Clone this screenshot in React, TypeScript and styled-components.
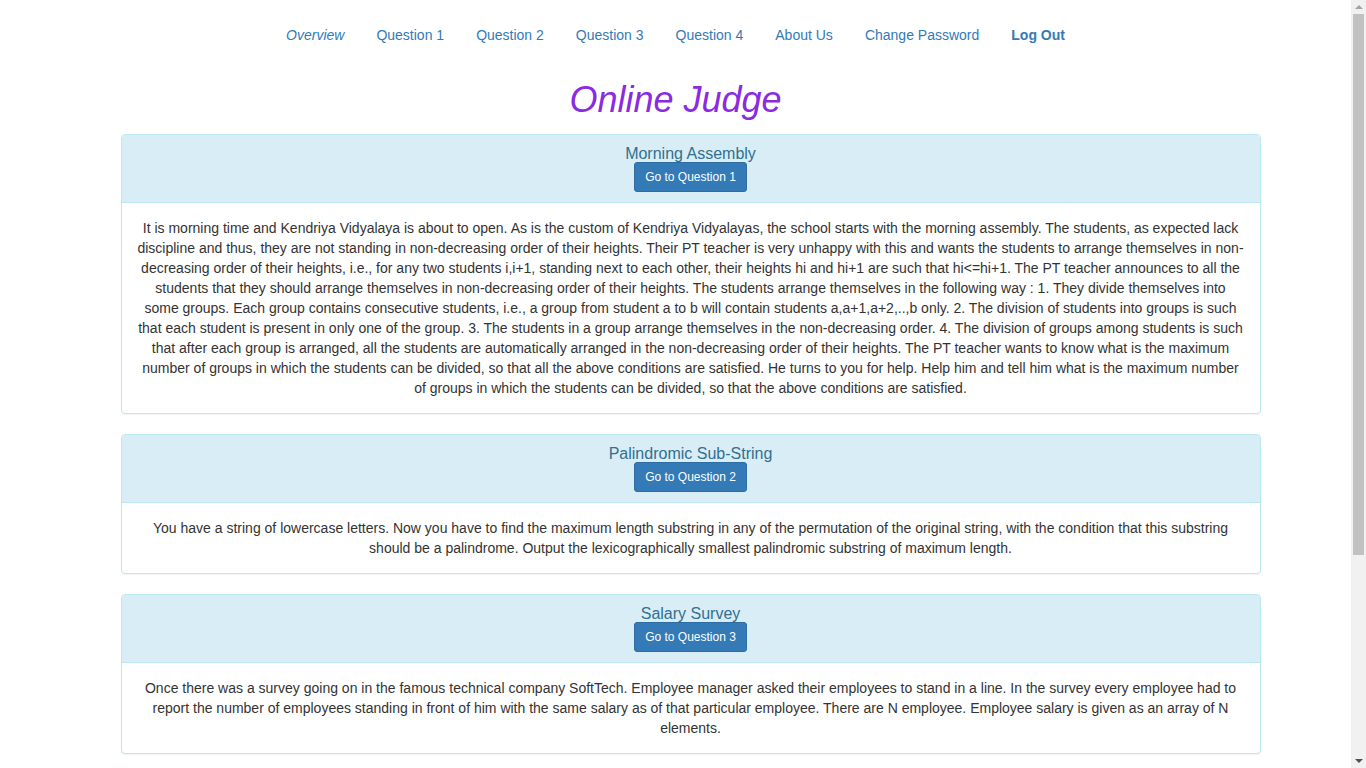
import React from "react";
import styled, { createGlobalStyle } from "styled-components";

const GlobalStyle = createGlobalStyle`
  html, body {
    margin: 0;
    padding: 0;
    background: #fff;
  }
  body {
    font-family: "Liberation Sans", Arial, Helvetica, sans-serif;
    font-size: 14px;
    line-height: 20px;
    color: #333;
  }
  * { box-sizing: border-box; }
`;

const Page = styled.div`
  margin-right: 15px;
  padding-top: 15px;
  padding-bottom: 40px;
`;

const Nav = styled.ul`
  list-style: none;
  margin: 0;
  padding: 0;
  display: flex;
  justify-content: center;
`;

const NavItem = styled.li`
  margin-left: 2px;
  &:first-child { margin-left: 0; }
`;

const NavLink = styled.a<{ $italic?: boolean; $bold?: boolean }>`
  display: block;
  padding: 10px 15px;
  line-height: 20px;
  color: #337ab7;
  text-decoration: none;
  font-style: ${(p) => (p.$italic ? "italic" : "normal")};
  font-weight: ${(p) => (p.$bold ? "bold" : "normal")};
  cursor: pointer;
`;

const Title = styled.h1`
  margin: 25px 0 14px;
  text-align: center;
  font-size: 36px;
  line-height: 40px;
  font-weight: 500;
  font-style: italic;
  color: #8a2be2;
`;

const Panels = styled.div`
  width: 1140px;
  margin-left: calc(50% - 555px);
`;

const Panel = styled.div`
  margin-bottom: 20px;
  background: #fff;
  border: 1px solid #bce8f1;
  border-radius: 4px;
  box-shadow: 0 1px 1px rgba(0, 0, 0, 0.05);
`;

const PanelHeading = styled.div`
  padding: 10px 15px;
  background: #d9edf7;
  color: #31708f;
  border-bottom: 1px solid #bce8f1;
  border-top-left-radius: 3px;
  border-top-right-radius: 3px;
  text-align: center;
  display: flex;
  flex-direction: column;
  align-items: center;
`;

const PanelTitle = styled.h3`
  margin: 0;
  font-size: 16px;
  line-height: 17px;
  font-weight: 500;
  color: #31708f;
`;

const Button = styled.button`
  display: block;
  height: 30px;
  padding: 5px 10px;
  font-family: inherit;
  font-size: 12px;
  line-height: 18px;
  color: #fff;
  background: #337ab7;
  border: 1px solid #2e6da4;
  border-radius: 3px;
  cursor: pointer;
`;

const PanelBody = styled.div`
  padding: 15px;
  text-align: center;
`;

const Scrollbar = styled.div`
  position: fixed;
  top: 0;
  right: 0;
  width: 15px;
  height: 100vh;
  background: #f1f1f1;
  display: flex;
  flex-direction: column;
`;

const ScrollArrow = styled.div<{ $down?: boolean; $dim?: boolean }>`
  height: 14px;
  flex: none;
  display: flex;
  align-items: center;
  justify-content: center;
  &::after {
    content: "";
    width: 0;
    height: 0;
    border-left: 4px solid transparent;
    border-right: 4px solid transparent;
    ${(p) =>
      p.$down
        ? `border-top: 4px solid ${p.$dim ? "#a3a3a3" : "#505050"};`
        : `border-bottom: 4px solid ${p.$dim ? "#a3a3a3" : "#505050"};`}
  }
`;

const ScrollTrack = styled.div`
  flex: 1;
  padding: 0 2px;
`;

const ScrollThumb = styled.div`
  height: 541px;
  background: #c1c1c1;
`;

const links = [
  { label: "Overview", italic: true },
  { label: "Question 1" },
  { label: "Question 2" },
  { label: "Question 3" },
  { label: "Question 4" },
  { label: "About Us" },
  { label: "Change Password" },
  { label: "Log Out", bold: true },
];

const questions = [
  {
    title: "Morning Assembly",
    button: "Go to Question 1",
    text: "It is morning time and Kendriya Vidyalaya is about to open. As is the custom of Kendriya Vidyalayas, the school starts with the morning assembly. The students, as expected lack discipline and thus, they are not standing in non-decreasing order of their heights. Their PT teacher is very unhappy with this and wants the students to arrange themselves in non-decreasing order of their heights, i.e., for any two students i,i+1, standing next to each other, their heights hi and hi+1 are such that hi<=hi+1. The PT teacher announces to all the students that they should arrange themselves in non-decreasing order of their heights. The students arrange themselves in the following way : 1. They divide themselves into some groups. Each group contains consecutive students, i.e., a group from student a to b will contain students a,a+1,a+2,..,b only. 2. The division of students into groups is such that each student is present in only one of the group. 3. The students in a group arrange themselves in the non-decreasing order. 4. The division of groups among students is such that after each group is arranged, all the students are automatically arranged in the non-decreasing order of their heights. The PT teacher wants to know what is the maximum number of groups in which the students can be divided, so that all the above conditions are satisfied. He turns to you for help. Help him and tell him what is the maximum number of groups in which the students can be divided, so that the above conditions are satisfied.",
  },
  {
    title: "Palindromic Sub-String",
    button: "Go to Question 2",
    text: "You have a string of lowercase letters. Now you have to find the maximum length substring in any of the permutation of the original string, with the condition that this substring should be a palindrome. Output the lexicographically smallest palindromic substring of maximum length.",
  },
  {
    title: "Salary Survey",
    button: "Go to Question 3",
    text: "Once there was a survey going on in the famous technical company SoftTech. Employee manager asked their employees to stand in a line. In the survey every employee had to report the number of employees standing in front of him with the same salary as of that particular employee. There are N employee. Employee salary is given as an array of N elements.",
  },
  {
    title: "Array Queries",
    button: "Go to Question 4",
    text: "You are given an array of N integers and Q queries. Each query asks for the sum of the elements between two given indices L and R, both inclusive. Answer every query in the order in which it is given, printing each answer on a new line.",
  },
];

export default function App() {
  return (
    <>
      <GlobalStyle />
      <Page>
        <Nav>
          {links.map((l) => (
            <NavItem key={l.label}>
              <NavLink $italic={l.italic} $bold={l.bold}>
                {l.label}
              </NavLink>
            </NavItem>
          ))}
        </Nav>
        <Title>Online Judge</Title>
        <Panels>
          {questions.map((q) => (
            <Panel key={q.title}>
              <PanelHeading>
                <PanelTitle>{q.title}</PanelTitle>
                <Button>{q.button}</Button>
              </PanelHeading>
              <PanelBody>{q.text}</PanelBody>
            </Panel>
          ))}
        </Panels>
      </Page>
      <Scrollbar aria-hidden="true">
        <ScrollArrow $dim />
        <ScrollTrack>
          <ScrollThumb />
        </ScrollTrack>
        <ScrollArrow $down />
      </Scrollbar>
    </>
  );
}
